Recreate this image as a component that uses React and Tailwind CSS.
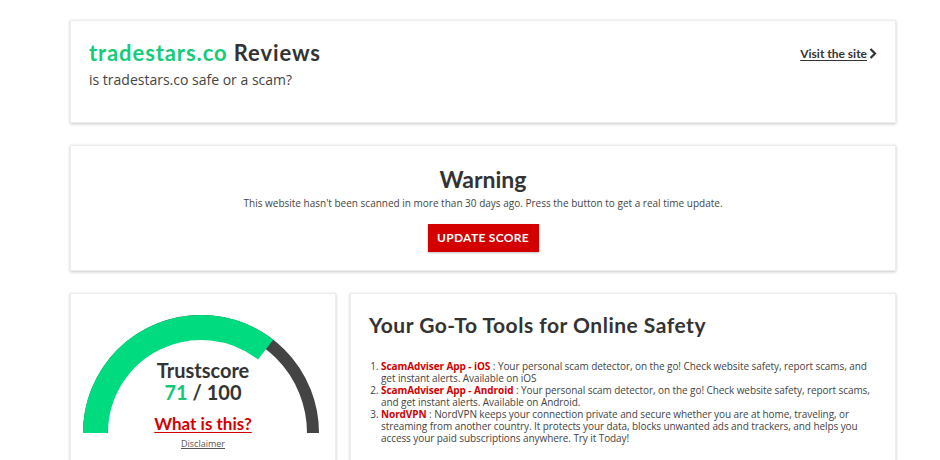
import React from 'react';

const head = { fontFamily: '"Lato", "Open Sans", sans-serif' };

const tools = [
  {
    name: 'ScamAdviser App - iOS',
    text: 'Your personal scam detector, on the go! Check website safety, report scams, and get instant alerts. Available on iOS',
  },
  {
    name: 'ScamAdviser App - Android',
    text: 'Your personal scam detector, on the go! Check website safety, report scams, and get instant alerts. Available on Android.',
  },
  {
    name: 'NordVPN',
    text: 'NordVPN keeps your connection private and secure whether you are at home, traveling, or streaming from another country. It protects your data, blocks unwanted ads and trackers, and helps you access your paid subscriptions anywhere. Try it Today!',
  },
];

const card = 'bg-white border border-[#ededed] shadow-[0_1px_3px_rgba(0,0,0,0.22)]';

// half-circle gauge, score out of 100
const Gauge = ({ score }) => {
  const cx = 130;
  const cy = 139;
  const r = 105.5;
  const a = Math.PI * (1 - score / 100);
  const ex = cx + r * Math.cos(a);
  const ey = cy - r * Math.sin(a);
  return (
    <svg className="absolute left-0 top-0" width="266" height="160" viewBox="0 0 266 160">
      <path d={`M ${cx - 112} ${cy} A 112 112 0 0 1 ${cx + 112} ${cy}`} fill="none" stroke="#444444" strokeWidth="12" />
      <path d={`M ${cx - r} ${cy} A ${r} ${r} 0 0 1 ${ex} ${ey}`} fill="none" stroke="#00db7f" strokeWidth="25" />
    </svg>
  );
};

export default function App() {
  return (
    <div className="w-[940px] h-[460px] overflow-hidden bg-white text-[#333]" style={{ fontFamily: '"Open Sans", sans-serif' }}>
      <div className="ml-[70px] w-[826px] pt-[20px] flex flex-col">
        {/* header */}
        <div className={`${card} h-[103px] flex justify-between pl-[18px] pr-[18px] pt-[18px]`}>
          <div>
            <h1 className="text-[22px] font-bold leading-[28px] tracking-[0.9px] text-[#333]" style={head}>
              <span className="text-[#14cc7a]">tradestars.co</span> Reviews
            </h1>
            <p className="mt-[3px] text-[14px] leading-[19px] text-[#444]">is tradestars.co safe or a scam?</p>
          </div>
          <a className="mt-[6px] flex items-start gap-[2px] text-[12px] font-bold text-[#333] underline underline-offset-2" style={head}>
            Visit the site
            <svg width="8" height="11" viewBox="0 0 8 11" className="mt-[3px]">
              <path d="M1.5 1 L6 5.5 L1.5 10" fill="none" stroke="#333" strokeWidth="2.2" />
            </svg>
          </a>
        </div>

        {/* warning */}
        <div className={`${card} mt-[22px] h-[126px] flex flex-col items-center pt-[19px]`}>
          <h2 className="text-[23px] font-bold leading-[29px] text-[#333]" style={head}>Warning</h2>
          <p className="mt-[2px] text-[10px] leading-[14px] text-[#444]">
            This website hasn't been scanned in more than 30 days ago. Press the button to get a real time update.
          </p>
          <button className="mt-[14px] w-[111px] h-[28px] bg-[#d40000] text-white text-[12px] font-bold tracking-[0.3px] shadow-[0_1px_2px_rgba(0,0,0,0.25)]" style={head}>
            UPDATE SCORE
          </button>
        </div>

        <div className="mt-[22px] flex gap-[14px]">
          {/* trustscore */}
          <div className={`${card} relative w-[266px] h-[180px] flex flex-col items-center pt-[65px]`}>
            <Gauge score={71} />
            <div className="relative text-[20px] font-bold leading-[22px] text-[#333]" style={head}>Trustscore</div>
            <div className="relative text-[20px] font-bold leading-[22px] text-[#333]" style={head}>
              <span className="text-[#12c877]">71</span> / 100
            </div>
            <a className="relative mt-[10px] text-[17px] font-bold leading-[22px] text-[#d40000] underline underline-offset-2" style={head}>
              What is this?
            </a>
            <a className="relative mt-[2px] text-[9px] text-[#555] underline">Disclaimer</a>
          </div>

          {/* tools */}
          <div className={`${card} flex-1 h-[180px] pl-[18px] pr-[18px] pt-[17px]`}>
            <h2 className="text-[21px] font-bold leading-[28px] tracking-[0.5px] text-[#333]" style={head}>Your Go-To Tools for Online Safety</h2>
            <ol className="mt-[21px] list-decimal pl-[12px] text-[10px] leading-[12px] tracking-[-0.08px] text-[#444]">
              {tools.map((t) => (
                <li key={t.name}>
                  <span className="font-bold text-[#d40000]">{t.name}</span> : {t.text}
                </li>
              ))}
            </ol>
          </div>
        </div>
      </div>
    </div>
  );
}
